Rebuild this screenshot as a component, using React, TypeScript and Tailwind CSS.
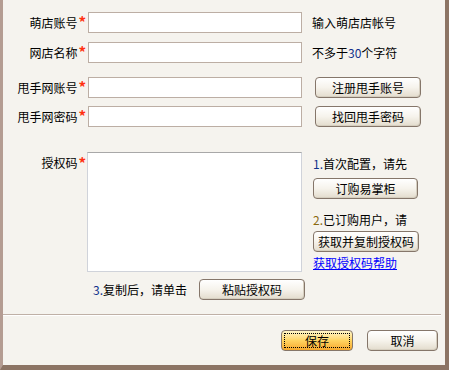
import React from "react";

const font = { fontFamily: '"Noto Sans CJK SC", "Liberation Sans", sans-serif' };

// XP style button
function XpButton({ children, w }: { children: React.ReactNode; w: string }) {
  return (
    <button
      className={`${w} h-[21px] rounded-[4px] border border-[#85766a] bg-gradient-to-b from-white via-[#f6f3ec] to-[#e3dccd] text-[12px] leading-none text-black flex items-center justify-center shadow-[inset_-1px_-1px_0_#d6cfc0]`}
    >
      {children}
    </button>
  );
}

function Label({ text }: { text: string }) {
  return (
    <div className="w-[85px] pr-[2px] flex justify-end items-center text-[12px] text-black">
      <span>{text}</span>
      <span className="text-[#ff3010] text-[15px] font-bold leading-none ml-px -mt-[2px]">*</span>
    </div>
  );
}

export default function App() {
  return (
    <div
      style={font}
      className="w-[449px] h-[370px] bg-[#f5f3ee] border-l-[3px] border-l-[#b49c92] border-r-[4px] border-r-[#8c7464] border-b-[5px] border-b-[#8c7464] flex flex-col text-[12px] text-black"
    >
      {/* 萌店账号 */}
      <div className="flex items-center h-[21px] mt-[12px]">
        <Label text="萌店账号" />
        <input className="w-[214px] h-[21px] bg-white border border-[#bcaea4] outline-none" />
        <span className="ml-[10px]">输入萌店店帐号</span>
      </div>

      {/* 网店名称 */}
      <div className="flex items-center h-[21px] mt-[9px]">
        <Label text="网店名称" />
        <input className="w-[214px] h-[21px] bg-white border border-[#bcaea4] outline-none" />
        <span className="ml-[10px]">
          不多于<span className="text-[#10308a]">30</span>个字符
        </span>
      </div>

      {/* 甩手网账号 */}
      <div className="flex items-center h-[21px] mt-[14px]">
        <Label text="甩手网账号" />
        <input className="w-[214px] h-[21px] bg-white border border-[#bcaea4] outline-none" />
        <div className="ml-[13px]">
          <XpButton w="w-[106px]">注册甩手账号</XpButton>
        </div>
      </div>

      {/* 甩手网密码 */}
      <div className="flex items-center h-[21px] mt-[8px]">
        <Label text="甩手网密码" />
        <input className="w-[214px] h-[21px] bg-white border border-[#bcaea4] outline-none" />
        <div className="ml-[13px]">
          <XpButton w="w-[106px]">找回甩手密码</XpButton>
        </div>
      </div>

      {/* 授权码 */}
      <div className="flex mt-[25px]">
        <div className="pt-[2px] h-[20px] flex">
          <Label text="授权码" />
        </div>
        <textarea className="w-[215px] h-[120px] bg-white border border-[#d0d3da] border-t-[#a8a8a8] outline-none resize-none -ml-px" />
        <div className="ml-[11px] flex flex-col">
          <span className="mt-[4px] leading-[16px]">
            <span className="text-[#10308a]">1.</span>首次配置，请先
          </span>
          <div className="mt-[6px]">
            <XpButton w="w-[105px]">订购易掌柜</XpButton>
          </div>
          <span className="mt-[13px] leading-[16px]">
            <span className="text-[#8a6a10]">2.</span>已订购用户，请
          </span>
          <div className="mt-[3px]">
            <XpButton w="w-[106px]">获取并复制授权码</XpButton>
          </div>
          <a href="#" className="mt-[3px] text-[#0000ff] underline leading-[16px]">
            获取授权码帮助
          </a>
        </div>
      </div>

      {/* 3. 粘贴 */}
      <div className="flex items-center h-[21px] mt-[7px] pl-[90px]">
        <span>
          <span className="text-[#10308a]">3.</span>复制后，请单击
        </span>
        <div className="ml-[12px]">
          <XpButton w="w-[106px]">粘贴授权码</XpButton>
        </div>
      </div>

      {/* separator */}
      <div className="mt-[14px] mr-[4px] h-px bg-[#bfb0a6] border-b border-white box-content" />

      {/* bottom buttons */}
      <div className="flex justify-end gap-[14px] mt-[14px] pr-[7px]">
        <button className="w-[72px] h-[21px] rounded-[4px] border border-[#85766a] bg-gradient-to-b from-[#fff6c8] via-[#ffd460] to-[#f6a82a] p-[2px] text-[12px]">
          <span className="w-full h-full flex items-center justify-center border border-dotted border-black">
            保存
          </span>
        </button>
        <XpButton w="w-[71px]">取消</XpButton>
      </div>
    </div>
  );
}
